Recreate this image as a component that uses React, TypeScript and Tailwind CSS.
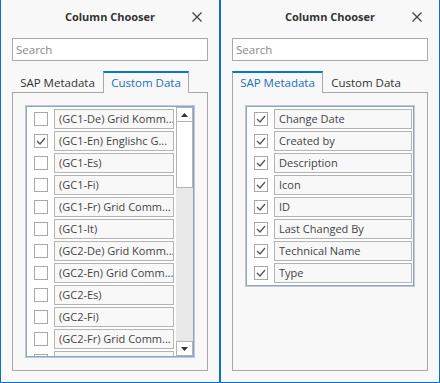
import React from "react";

type Item = { label: string; checked: boolean };

const customItems: Item[] = [
  { label: "(GC1-De) Grid Komm...", checked: false },
  { label: "(GC1-En) Englishc G...", checked: true },
  { label: "(GC1-Es)", checked: false },
  { label: "(GC1-Fi)", checked: false },
  { label: "(GC1-Fr) Grid Comm...", checked: false },
  { label: "(GC1-It)", checked: false },
  { label: "(GC2-De) Grid Komm...", checked: false },
  { label: "(GC2-En) Grid Comm...", checked: false },
  { label: "(GC2-Es)", checked: false },
  { label: "(GC2-Fi)", checked: false },
  { label: "(GC2-Fr) Grid Comm...", checked: false },
  { label: "", checked: false },
];

const sapItems: Item[] = [
  "Change Date",
  "Created by",
  "Description",
  "Icon",
  "ID",
  "Last Changed By",
  "Technical Name",
  "Type",
].map((label) => ({ label, checked: true }));

const font = { fontFamily: '"Open Sans", "Noto Sans", sans-serif' };

function CheckBox({ checked }: { checked: boolean }) {
  return (
    <div className="w-[14px] h-[14px] border border-[#a8a8a8] bg-white flex items-center justify-center shrink-0">
      {checked && (
        <svg width="10" height="8" viewBox="0 0 10 8">
          <path d="M1 4 L4 7 L9 1" fill="none" stroke="#555" strokeWidth="1.3" />
        </svg>
      )}
    </div>
  );
}

function Row({ item }: { item: Item }) {
  return (
    <div className="flex items-center h-[20px] mb-[2px]">
      <div className="w-[27px] flex justify-center pl-[1px]">
        <CheckBox checked={item.checked} />
      </div>
      <div className="flex-1 h-[20px] border border-[#b4b4b4] bg-[#f8f8f8] pl-[4px] text-[11px] leading-[18px] text-[#444] whitespace-nowrap overflow-hidden">
        {item.label}
      </div>
    </div>
  );
}

function Scrollbar() {
  return (
    <div className="w-[17px] h-full bg-[#e8e8e8] flex flex-col ml-[2px]">
      <div className="h-[15px] border border-[#b4b4b4] bg-white flex items-center justify-center">
        <svg width="7" height="4" viewBox="0 0 7 4">
          <path d="M0 4 L3.5 0 L7 4 Z" fill="#333" />
        </svg>
      </div>
      <div className="h-[66px] border border-[#b4b4b4] border-t-0 bg-white" />
      <div className="flex-1" />
      <div className="h-[15px] border border-[#b4b4b4] bg-white flex items-center justify-center">
        <svg width="7" height="4" viewBox="0 0 7 4">
          <path d="M0 0 L3.5 4 L7 0 Z" fill="#333" />
        </svg>
      </div>
    </div>
  );
}

function Panel({ active, items, scroll }: { active: "sap" | "custom"; items: Item[]; scroll: boolean }) {
  const tabBase = "text-[11.5px] leading-[19px] whitespace-nowrap text-center";
  const activeTab = "h-[22px] border-t-2 border-t-[#0a74d6] border-x border-x-[#a8a8a8] bg-[#f8f8f8] text-[#1a6fc0] -mb-[1px] relative";
  const idleTab = "h-[21px] text-[#333] pt-[2px]";
  return (
    <div className="w-[220px] h-[383px] bg-[#f8f8f8] border-x border-b border-[#0a6fcf] px-[11px] flex flex-col" style={font}>
      <div className="relative h-[38px] flex items-center justify-center">
        <span className="text-[11px] font-bold text-[#333] -mt-[4px]">Column Chooser</span>
        <svg className="absolute right-[6px] top-[12px]" width="10" height="10" viewBox="0 0 10 10">
          <path d="M0.5 0.5 L9.5 9.5 M9.5 0.5 L0.5 9.5" stroke="#444" strokeWidth="1.3" />
        </svg>
      </div>
      <div className="h-[23px] border border-[#a8a8a8] bg-white px-[3px] text-[11.5px] leading-[21px] text-[#8a8a8a]">
        Search
      </div>
      <div className="flex mt-[10px] h-[21px] items-end">
        <div className={`${tabBase} ${active === "sap" ? activeTab : idleTab} w-[91px]`}>SAP Metadata</div>
        <div className={`${tabBase} ${active === "custom" ? activeTab : idleTab} w-[86px]`}>Custom Data</div>
      </div>
      <div className="h-[279px] border border-[#a8a8a8] p-[13px]">
        <div
          className={`border border-[#8aa4d2] shadow-[0_0_0_1px_#c8c8c8] bg-white flex ${scroll ? "h-[251px]" : "h-[180px]"}`}
        >
          <div className={`flex-1 overflow-hidden pt-[2px] ${scroll ? "" : "pr-[1px]"}`}>
            {items.map((it, i) => (
              <Row key={i} item={it} />
            ))}
          </div>
          {scroll && <Scrollbar />}
        </div>
      </div>
    </div>
  );
}

export default function App() {
  return (
    <div className="flex w-[440px] h-[383px]">
      <Panel active="custom" items={customItems} scroll />
      <Panel active="sap" items={sapItems} scroll={false} />
    </div>
  );
}
